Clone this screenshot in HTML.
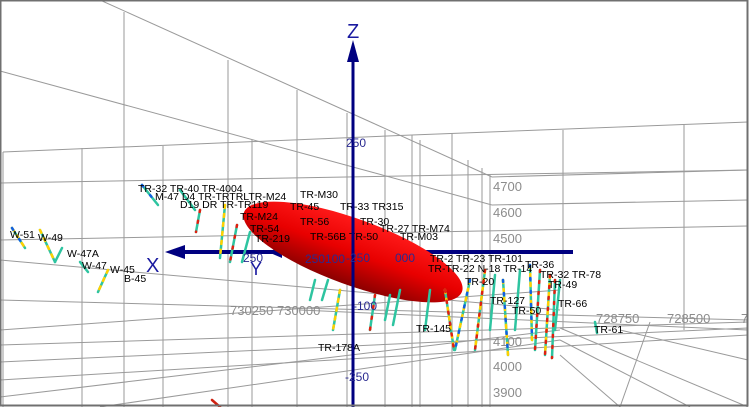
<!DOCTYPE html>
<html><head><meta charset="utf-8"><style>
html,body{margin:0;padding:0;background:#fff}
svg{display:block}
text{font-family:"Liberation Sans",sans-serif}
</style></head><body>
<svg width="749" height="407" viewBox="0 0 749 407" xmlns="http://www.w3.org/2000/svg">
<defs>
<linearGradient id="eg" x1="0" y1="0" x2="0" y2="1">
<stop offset="0" stop-color="#ff1a1a"/><stop offset="0.5" stop-color="#e80000"/><stop offset="1" stop-color="#8a0000"/>
</linearGradient>
</defs>
<rect x="0" y="0" width="749" height="407" fill="#fff"/>
<g stroke="#9a9a9a" stroke-width="1" fill="none">
<line x1="100" y1="0" x2="375" y2="124"/>
<line x1="375" y1="124" x2="492" y2="177"/>
<line x1="0" y1="71" x2="375" y2="173"/>
<line x1="375" y1="173" x2="492" y2="205"/>
<line x1="124" y1="12" x2="124" y2="407"/>
<line x1="228" y1="60" x2="228" y2="407"/>
<line x1="297" y1="90" x2="297" y2="407"/>
<line x1="347" y1="113" x2="347" y2="407"/>
<line x1="3" y1="152" x2="412" y2="135"/>
<line x1="412" y1="135" x2="748" y2="122"/>
<line x1="0" y1="183" x2="748" y2="170"/>
<line x1="82" y1="148" x2="82" y2="407"/>
<line x1="163" y1="146" x2="163" y2="407"/>
<line x1="252" y1="140" x2="252" y2="407"/>
<line x1="3" y1="152" x2="3" y2="407"/>
<line x1="492" y1="177" x2="748" y2="170"/>
<line x1="563" y1="130" x2="563" y2="330"/>
<line x1="684" y1="125" x2="684" y2="330"/>
<line x1="412" y1="135" x2="412" y2="407"/>
<line x1="452" y1="133" x2="452" y2="407"/>
<line x1="468" y1="160" x2="468" y2="407"/>
<line x1="482" y1="168" x2="482" y2="407"/>
<line x1="490" y1="175" x2="490" y2="407"/>
<line x1="385" y1="130" x2="385" y2="407"/>
<line x1="420" y1="140" x2="420" y2="407"/>
<line x1="0" y1="240" x2="748" y2="226"/>
<line x1="492" y1="205" x2="748" y2="200"/>
<line x1="0" y1="300" x2="748" y2="320"/>
<line x1="0" y1="330" x2="560" y2="290"/>
<line x1="0" y1="345" x2="748" y2="322"/>
<line x1="0" y1="362" x2="748" y2="328"/>
<line x1="0" y1="380" x2="748" y2="335"/>
<line x1="0" y1="397" x2="560" y2="330"/>
<line x1="100" y1="407" x2="560" y2="340"/>
<line x1="0" y1="260" x2="560" y2="310"/>
<line x1="300" y1="310" x2="748" y2="330"/>
<line x1="560" y1="328" x2="748" y2="407"/>
<line x1="560" y1="340" x2="690" y2="407"/>
<line x1="560" y1="355" x2="620" y2="407"/>
<line x1="620" y1="330" x2="748" y2="360"/>
<line x1="650" y1="322" x2="620" y2="407"/>
</g>
<g fill="#8c8c8c" font-size="13">
<text x="493" y="191">4700</text><text x="493" y="217">4600</text><text x="493" y="243">4500</text>
<text x="493" y="346">4100</text><text x="493" y="371">4000</text><text x="493" y="397">3900</text>
<text x="230" y="315">730250 730000</text><text x="596" y="323">728750</text><text x="667" y="323">728500</text><text x="741" y="323">7</text>
</g>
<!-- X axis (behind ellipse) -->
<g fill="#000080" stroke="#000080">
<line x1="180" y1="252" x2="573" y2="252" stroke-width="4"/>
<polygon points="165,252 185,245 185,259" stroke="none"/>
<polygon points="268,252 282,246 282,258" stroke="none"/>
</g>
<ellipse cx="353" cy="252" rx="116" ry="33" transform="rotate(20 353 252)" fill="url(#eg)"/>
<g stroke-width="2.5" fill="none" stroke-linecap="round">
<g stroke="#2ec4a0">
<line x1="12" y1="228" x2="25" y2="248"/><line x1="40" y1="230" x2="55" y2="262"/><line x1="62" y1="248" x2="55" y2="262"/><line x1="80" y1="262" x2="88" y2="272"/><line x1="108" y1="270" x2="98" y2="292"/>
<line x1="142" y1="185" x2="158" y2="205"/><line x1="180" y1="190" x2="195" y2="210"/><line x1="200" y1="210" x2="196" y2="232"/><line x1="225" y1="205" x2="220" y2="258"/><line x1="237" y1="225" x2="230" y2="262"/><line x1="250" y1="232" x2="242" y2="262"/>
<line x1="315" y1="280" x2="310" y2="300"/><line x1="328" y1="280" x2="322" y2="300"/><line x1="340" y1="290" x2="333" y2="330"/><line x1="375" y1="295" x2="370" y2="330"/><line x1="390" y1="295" x2="385" y2="320"/>
<line x1="400" y1="290" x2="393" y2="325"/><line x1="430" y1="290" x2="425" y2="330"/><line x1="445" y1="290" x2="454" y2="350"/><line x1="470" y1="280" x2="455" y2="350"/>
<line x1="485" y1="270" x2="475" y2="350"/><line x1="495" y1="275" x2="490" y2="330"/><line x1="503" y1="280" x2="508" y2="355"/><line x1="520" y1="270" x2="515" y2="330"/>
<line x1="530" y1="265" x2="532" y2="340"/><line x1="550" y1="275" x2="545" y2="355"/><line x1="555" y1="280" x2="552" y2="358"/><line x1="560" y1="280" x2="555" y2="330"/>
<line x1="595" y1="322" x2="597" y2="333"/><line x1="540" y1="270" x2="535" y2="350"/>
</g>
<g stroke="#ffd000" stroke-dasharray="3 6">
<line x1="12" y1="228" x2="25" y2="248"/><line x1="40" y1="230" x2="55" y2="262"/><line x1="108" y1="270" x2="98" y2="292"/><line x1="225" y1="205" x2="220" y2="258"/>
<line x1="340" y1="290" x2="333" y2="330"/><line x1="445" y1="290" x2="454" y2="350"/><line x1="470" y1="280" x2="455" y2="350"/><line x1="485" y1="270" x2="475" y2="350"/><line x1="530" y1="265" x2="532" y2="340"/><line x1="550" y1="275" x2="545" y2="355"/><line x1="503" y1="280" x2="508" y2="355"/>
</g>
<g stroke="#e02010" stroke-dasharray="2 9">
<line x1="200" y1="210" x2="196" y2="232"/><line x1="237" y1="225" x2="230" y2="262"/><line x1="375" y1="295" x2="370" y2="330"/><line x1="445" y1="290" x2="454" y2="350"/><line x1="485" y1="270" x2="475" y2="350"/><line x1="550" y1="275" x2="545" y2="355"/><line x1="555" y1="280" x2="552" y2="358"/><line x1="540" y1="270" x2="535" y2="350"/>
</g>
<g stroke="#1060e0" stroke-dasharray="2 11">
<line x1="12" y1="228" x2="25" y2="248"/><line x1="142" y1="185" x2="158" y2="205"/><line x1="470" y1="280" x2="455" y2="350"/><line x1="530" y1="265" x2="532" y2="340"/><line x1="503" y1="280" x2="508" y2="355"/>
</g>
<line x1="212" y1="400" x2="220" y2="407" stroke="#d02010"/>
</g>
<g fill="#000" font-size="10.5">
<text x="10" y="238">W-51</text><text x="38" y="241">W-49</text><text x="67" y="257">W-47A</text><text x="82" y="269">W-47</text><text x="110" y="273">W-45</text><text x="124" y="282">B-45</text>
<text x="138" y="192">TR-32 TR-40 TR-4004</text><text x="155" y="200">M-47 D4 TR-TRTRLTR-M24</text><text x="300" y="198">TR-M30</text>
<text x="180" y="208">D19 DR TR-TR119</text><text x="290" y="210">TR-45</text><text x="240" y="220">TR-M24</text>
<text x="250" y="232">TR-54</text><text x="300" y="225">TR-56</text><text x="255" y="242">TR-219</text><text x="310" y="240">TR-56B TR-50</text>
<text x="340" y="210">TR-33 TR315</text><text x="360" y="225">TR-30</text><text x="380" y="232">TR-27 TR-M74</text><text x="400" y="240">TR-M03</text>
<text x="430" y="262">TR-2 TR-23 TR-101</text><text x="428" y="272">TR-TR-22 N-18 TR-14</text><text x="525" y="268">TR-36</text><text x="540" y="278">TR-32 TR-78</text>
<text x="465" y="285">TR-20</text><text x="548" y="288">TR-49</text><text x="490" y="304">TR-127</text><text x="512" y="314">TR-50</text><text x="558" y="307">TR-66</text>
<text x="416" y="332">TR-145</text><text x="318" y="351">TR-178A</text><text x="594" y="333">TR-61</text>
</g>
<g fill="#000080" stroke="#000080">
<line x1="353" y1="55" x2="353" y2="407" stroke-width="3"/>
<polygon points="353,40 347,62 359,62" stroke="none"/>
</g>
<g fill="#1a1aa0" font-size="20">
<text x="347" y="38">Z</text><text x="146" y="272">X</text><text x="250" y="275" font-size="18">Y</text>
</g>
<g fill="#2a2a90" font-size="12">
<text x="346" y="147">250</text><text x="243" y="262">250</text><text x="305" y="263">250100</text><text x="346" y="262">-250</text><text x="395" y="262">000</text>
<text x="353" y="310">-100</text><text x="345" y="381">-250</text>
</g>
<rect x="0.5" y="0.5" width="747" height="405" fill="none" stroke="#707070" stroke-width="2"/>
</svg>
</body></html>
